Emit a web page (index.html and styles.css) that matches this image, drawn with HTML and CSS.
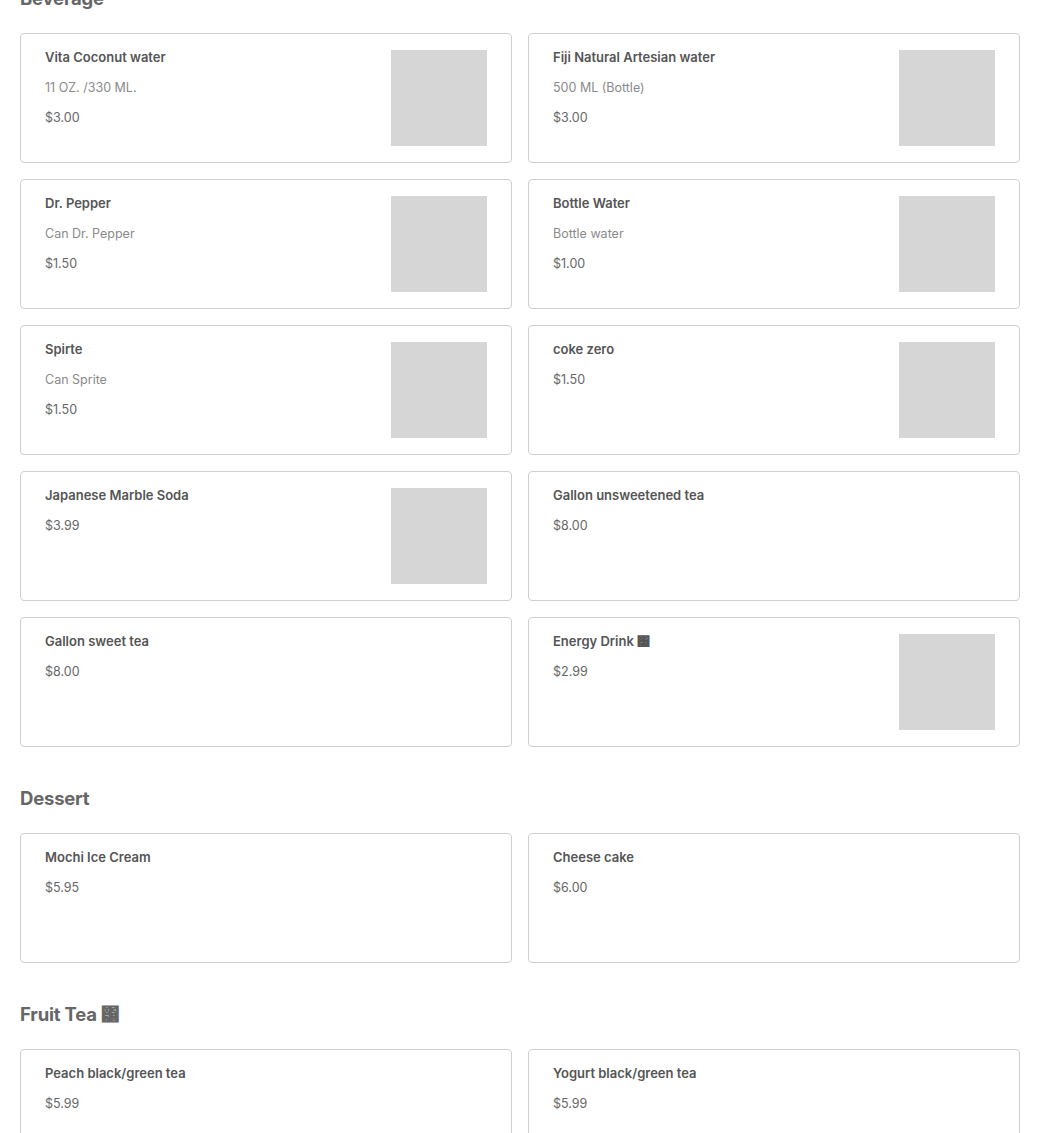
FILE: index.html
```html
<!DOCTYPE html>
<html lang="en">
<head>
    <meta charset="UTF-8">
    <meta name="viewport" content="width=device-width, initial-scale=1.0">
    <title>Menu</title>
    <link rel="stylesheet" href="styles.css">
</head>
<body>
    <div class="menu">
        <section class="category">
            <h2>Beverage</h2>
            <div class="items">
                <div class="item">
                    <div class="info">
                        <div class="name">Vita Coconut water</div>
                        <div class="desc">11 OZ. /330 ML.</div>
                        <div class="price">$3.00</div>
                    </div>
                    <div class="thumb"></div>
                </div>
                <div class="item">
                    <div class="info">
                        <div class="name">Fiji Natural Artesian water</div>
                        <div class="desc">500 ML (Bottle)</div>
                        <div class="price">$3.00</div>
                    </div>
                    <div class="thumb"></div>
                </div>
                <div class="item">
                    <div class="info">
                        <div class="name">Dr. Pepper</div>
                        <div class="desc">Can Dr. Pepper</div>
                        <div class="price">$1.50</div>
                    </div>
                    <div class="thumb"></div>
                </div>
                <div class="item">
                    <div class="info">
                        <div class="name">Bottle Water</div>
                        <div class="desc">Bottle water</div>
                        <div class="price">$1.00</div>
                    </div>
                    <div class="thumb"></div>
                </div>
                <div class="item">
                    <div class="info">
                        <div class="name">Spirte</div>
                        <div class="desc">Can Sprite</div>
                        <div class="price">$1.50</div>
                    </div>
                    <div class="thumb"></div>
                </div>
                <div class="item">
                    <div class="info">
                        <div class="name">coke zero</div>
                        <div class="price">$1.50</div>
                    </div>
                    <div class="thumb"></div>
                </div>
                <div class="item">
                    <div class="info">
                        <div class="name">Japanese Marble Soda</div>
                        <div class="price">$3.99</div>
                    </div>
                    <div class="thumb"></div>
                </div>
                <div class="item">
                    <div class="info">
                        <div class="name">Gallon unsweetened tea</div>
                        <div class="price">$8.00</div>
                    </div>
                </div>
                <div class="item">
                    <div class="info">
                        <div class="name">Gallon sweet tea</div>
                        <div class="price">$8.00</div>
                    </div>
                </div>
                <div class="item">
                    <div class="info">
                        <div class="name">Energy Drink &#x378;</div>
                        <div class="price">$2.99</div>
                    </div>
                    <div class="thumb"></div>
                </div>
            </div>
        </section>

        <section class="category">
            <h2>Dessert</h2>
            <div class="items">
                <div class="item">
                    <div class="info">
                        <div class="name">Mochi Ice Cream</div>
                        <div class="price">$5.95</div>
                    </div>
                </div>
                <div class="item">
                    <div class="info">
                        <div class="name">Cheese cake</div>
                        <div class="price">$6.00</div>
                    </div>
                </div>
            </div>
        </section>

        <section class="category">
            <h2>Fruit Tea &#x378;</h2>
            <div class="items">
                <div class="item">
                    <div class="info">
                        <div class="name">Peach black/green tea</div>
                        <div class="price">$5.99</div>
                    </div>
                </div>
                <div class="item">
                    <div class="info">
                        <div class="name">Yogurt black/green tea</div>
                        <div class="price">$5.99</div>
                    </div>
                </div>
            </div>
        </section>
    </div>
</body>
</html>
```

FILE: styles.css
```css
body {
    font-family: Inter, 'Noto Sans', sans-serif;
    background: #ffffff;
    margin: 0;
    padding: 0 20px;
    color: #555;
}
.menu {
    margin-top: -14px;
}
.category {
    margin-bottom: 39px;
}
h2 {
    font-size: 18.5px;
    line-height: 24px;
    font-weight: 700;
    color: #666;
    margin: 0 0 23px;
    letter-spacing: -0.2px;
}
.items {
    display: grid;
    grid-template-columns: 1fr 1fr;
    gap: 16px;
}
.item {
    display: flex;
    justify-content: space-between;
    height: 130px;
    box-sizing: border-box;
    border: 1px solid #cfcfcf;
    border-radius: 4px;
    padding: 16px 24px;
}
.info {
    display: flex;
    flex-direction: column;
    gap: 16px;
    margin-top: 1px;
}
.name {
    font-size: 13px;
    line-height: 14px;
    font-weight: 600;
    color: #555;
    margin-top: -1px;
    margin-bottom: 1px;
}
.desc {
    font-size: 12.5px;
    line-height: 14px;
    color: #8a8a8a;
}
.price {
    font-size: 12.5px;
    line-height: 14px;
    color: #666;
}
.thumb {
    width: 96px;
    height: 96px;
    background: #d6d6d6;
    flex-shrink: 0;
}
```
